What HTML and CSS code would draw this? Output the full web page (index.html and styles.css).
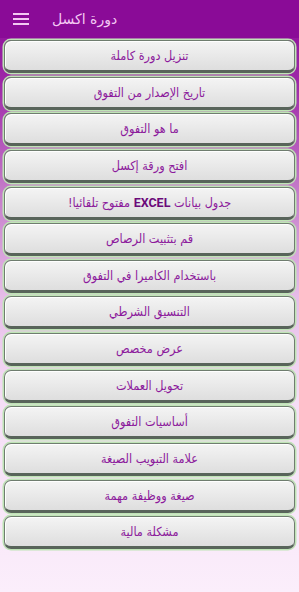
FILE: index.html
```html
<!DOCTYPE html>
<html lang="ar">
<head>
    <meta charset="UTF-8">
    <meta name="viewport" content="width=device-width, initial-scale=1.0">
    <title>دورة اكسل</title>
    <link rel="stylesheet" href="styles.css">
</head>
<body>
    <header class="topbar">
        <svg class="menu-icon" width="16" height="12" viewBox="0 0 16 12">
            <rect x="0" y="0" width="16" height="2" fill="#f3c8f3"/>
            <rect x="0" y="5" width="16" height="2" fill="#f3c8f3"/>
            <rect x="0" y="10" width="16" height="2" fill="#f3c8f3"/>
        </svg>
        <span class="title">دورة اكسل</span>
    </header>

    <div class="lessons">
        <button class="lesson">تنزيل دورة كاملة</button>
        <button class="lesson">تاريخ الإصدار من التفوق</button>
        <button class="lesson">ما هو التفوق</button>
        <button class="lesson">افتح ورقة إكسل</button>
        <button class="lesson">جدول بيانات <b>EXCEL</b> مفتوح تلقائيا!</button>
        <button class="lesson">قم بتثبيت الرصاص</button>
        <button class="lesson">باستخدام الكاميرا في التفوق</button>
        <button class="lesson">التنسيق الشرطي</button>
        <button class="lesson">عرض مخصص</button>
        <button class="lesson">تحويل العملات</button>
        <button class="lesson">أساسيات التفوق</button>
        <button class="lesson">علامة التبويب الصيغة</button>
        <button class="lesson">صيغة ووظيفة مهمة</button>
        <button class="lesson">مشكلة مالية</button>
    </div>
</body>
</html>
```

FILE: styles.css
```css
html, body {
    margin: 0;
    height: 100%;
}

body {
    background: linear-gradient(to bottom, #8a0b97 0%, #9e28a8 14%, #c47ac9 32%, #e6bce8 50%, #f5def6 68%, #fbeefb 100%);
    font-family: "DejaVu Sans", sans-serif;
}

.topbar {
    display: flex;
    align-items: center;
    height: 38px;
    padding: 0 0 0 13px;
    background-color: #8a0b97;
}

.menu-icon {
    display: block;
}

.title {
    margin-left: 23px;
    color: #f3c8f3;
    font-size: 14px;
}

.lessons {
    display: flex;
    flex-direction: column;
    gap: 3.65px;
    padding: 2px 4px 0;
}

.lesson {
    height: 33px;
    padding: 0;
    border: 1px solid #6f7d6f;
    border-bottom: 3px solid #58645a;
    border-radius: 7px;
    background: linear-gradient(to bottom, #f4f4f4, #dedede);
    box-shadow: 0 0 0 1.5px #bfe4b6, inset 1px 1px 0 #ffffff;
    color: #8c1a9c;
    font-family: "DejaVu Sans Condensed", "DejaVu Sans", sans-serif;
    font-size: 12.5px;
    direction: rtl;
    text-align: center;
}

.lesson b {
    color: #6b0a7a;
    font-family: "Roboto", sans-serif;
    font-size: 12.5px;
    font-weight: bold;
}
```
